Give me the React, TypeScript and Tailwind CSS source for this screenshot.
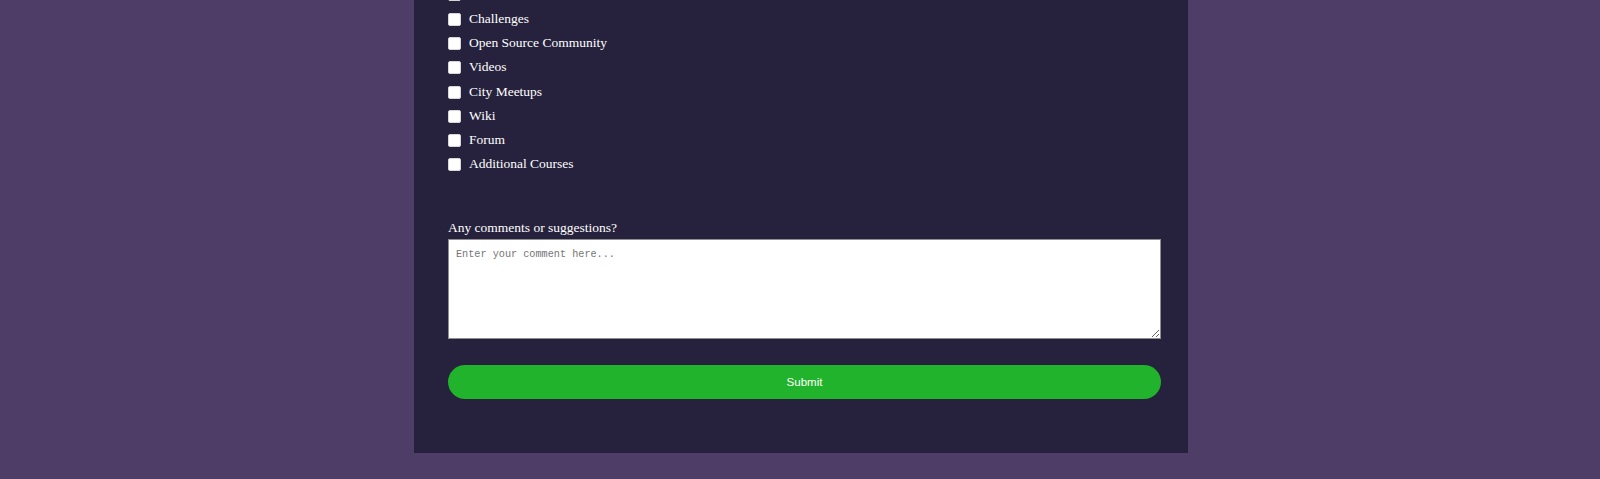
import React from "react";

const options = [
  "Data Visualization",
  "Challenges",
  "Open Source Community",
  "Videos",
  "City Meetups",
  "Wiki",
  "Forum",
  "Additional Courses",
];

export default function App() {
  return (
    <div className="min-h-[479px] w-full bg-[#4e3e67] overflow-hidden font-['Liberation_Serif',serif]">
      <div className="flex justify-center pl-[2px]">
        <div className="w-[774px] bg-[#26223d] pl-[34px] pr-[27px] pb-[54px] -mt-[17.6px]">
          <div className="flex flex-col">
            {options.map((o) => (
              <label key={o} className="flex h-[24.3px] items-start cursor-pointer">
                <input
                  type="checkbox"
                  className="appearance-none m-0 mt-[6px] w-[13px] h-[13px] bg-white rounded-[2px] border border-[#d6d6d6] shrink-0"
                />
                <span className="ml-[8px] text-white text-[13.5px] leading-[24px]">{o}</span>
              </label>
            ))}
          </div>
          <div className="mt-[43px] text-white text-[13.5px] leading-[15px]">
            Any comments or suggestions?
          </div>
          <textarea
            placeholder="Enter your comment here..."
            className="block mt-[4px] w-[713px] h-[100px] bg-white border border-[#8f8f8f] px-[7px] pt-[8px] font-['Liberation_Mono',monospace] text-[10.2px] leading-[13px] text-black placeholder:text-[#757575] outline-none"
          />
          <button
            type="button"
            className="mt-[26px] w-[713px] h-[34px] rounded-full bg-[#21b32b] text-white text-[11.5px] pt-[1px] font-['Liberation_Sans',Arial,sans-serif] flex items-center justify-center"
          >
            Submit
          </button>
        </div>
      </div>
    </div>
  );
}
